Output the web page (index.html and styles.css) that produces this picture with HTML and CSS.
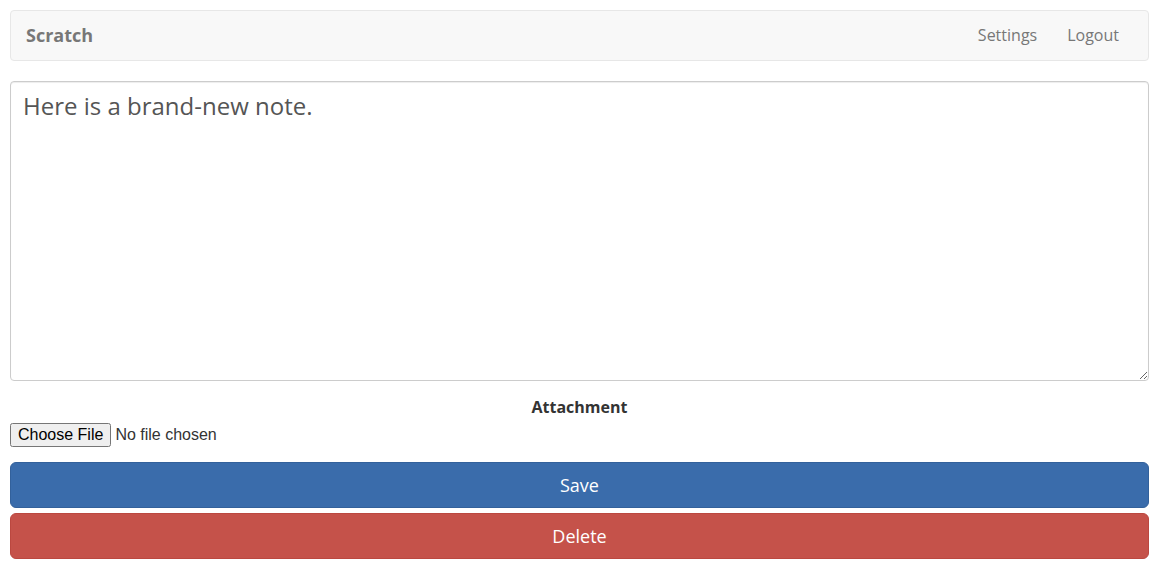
FILE: index.html
```html
<!DOCTYPE html>
<html>
<head>
<meta charset="utf-8">
<link rel="stylesheet" href="styles.css">
</head>
<body>
<div class="app">
  <nav class="navbar">
    <a class="brand" href="#">Scratch</a>
    <div class="nav-links">
      <a href="#">Settings</a>
      <a href="#">Logout</a>
    </div>
  </nav>
  <form class="note-form">
    <div class="form-group">
      <textarea class="note-text">Here is a brand-new note.</textarea>
    </div>
    <div class="form-group">
      <label class="attach-label">Attachment</label>
      <input type="file" class="file-input">
    </div>
    <button type="button" class="btn btn-save">Save</button>
    <button type="button" class="btn btn-delete">Delete</button>
  </form>
</div>
</body>
</html>
```
FILE: styles.css
```css
* { box-sizing: border-box; }
html, body { margin: 0; padding: 0; background: #fff; }
body {
  font-family: "Open Sans", "Helvetica Neue", Arial, sans-serif;
  font-size: 16px;
  line-height: 1.42857;
  color: #333;
}
.app { padding: 10px 10px; }
.navbar {
  display: flex;
  align-items: center;
  justify-content: space-between;
  height: 51px;
  background: #f8f8f8;
  border: 1px solid #e7e7e7;
  border-radius: 4px;
  margin-bottom: 20px;
  padding: 0 15px;
}
.brand {
  font-size: 18px;
  font-weight: 700;
  color: #777;
  text-decoration: none;
}
.nav-links { display: flex; gap: 30px; padding-right: 14px; }
.nav-links a { color: #777; text-decoration: none; font-size: 16px; }
.form-group { margin-bottom: 15px; }
.note-text {
  display: block;
  width: 100%;
  height: 300px;
  padding: 6px 12px;
  font-family: "Open Sans", sans-serif;
  font-size: 24px;
  line-height: 1.5;
  color: #555;
  border: 1px solid #ccc;
  border-radius: 4px;
  box-shadow: inset 0 1px 1px rgba(0,0,0,.075);
  resize: vertical;
  margin: 0;
}
.attach-label {
  display: block;
  text-align: center;
  font-weight: 700;
  margin-bottom: 4px;
  margin-top: 15px;
  font-size: 16px;
}
.file-input {
  font-family: "Liberation Sans", Arial, sans-serif;
  font-size: 16px;
  display: block;
}
.btn {
  display: block;
  width: 100%;
  height: 46px;
  border: 1px solid transparent;
  border-radius: 6px;
  font-family: "Open Sans", sans-serif;
  font-size: 18px;
  color: #fff;
  margin: 0 0 5px 0;
  cursor: pointer;
}
.btn-save { background: #3a6cab; border-color: #33619b; margin-top: 15px; }
.btn-delete { background: #c5524a; border-color: #bb4840; }
```
